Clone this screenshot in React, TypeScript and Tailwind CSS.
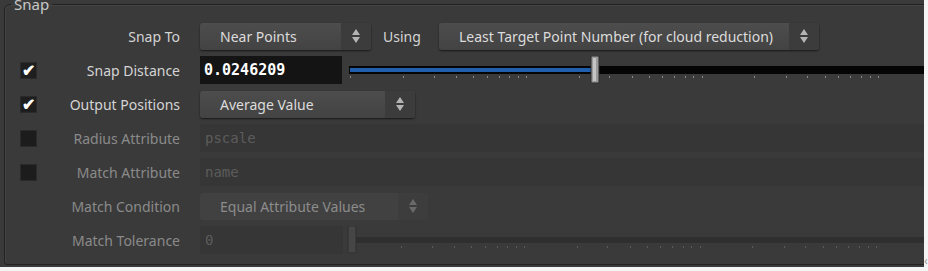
import React from "react";

const TICKS = [
  1, 54, 85, 107, 124, 138, 150, 160, 169, 177, 230, 260, 283, 300, 313, 325,
  336, 344, 353, 405, 437, 458, 476, 489, 501, 512, 521, 529,
];

function Checkbox({ checked, disabled }: { checked?: boolean; disabled?: boolean }) {
  return (
    <div
      className={`w-[17px] h-[17px] flex items-center justify-center border ${
        disabled ? "bg-[#1c1c1c] border-[#2a2a2a]" : "bg-[#1e1e1e] border-[#2a2a2a]"
      }`}
    >
      {checked && (
        <span className="text-white text-[16px] leading-none font-bold -mt-px">✔</span>
      )}
    </div>
  );
}

function Arrows({ dim }: { dim?: boolean }) {
  return (
    <svg width="10" height="16" viewBox="0 0 10 16">
      <path d="M5 1 L9 7 L1 7 Z" fill={dim ? "#6a6a6a" : "#b4b4b4"} />
      <path d="M1 9 L9 9 L5 15 Z" fill={dim ? "#6a6a6a" : "#b4b4b4"} />
    </svg>
  );
}

function Dropdown({
  text,
  width,
  disabled,
}: {
  text: string;
  width: number;
  disabled?: boolean;
}) {
  return (
    <div
      className={`flex h-[27px] rounded-[3px] overflow-hidden ${
        disabled
          ? "bg-[#414141] text-[#8c8c8c]"
          : "bg-gradient-to-b from-[#4d4d4d] to-[#434343] text-[#dcdcdc] shadow-[0_1px_2px_rgba(0,0,0,0.6)]"
      }`}
      style={{ width }}
    >
      <div className="flex-1 flex items-center pl-5 text-[14px] whitespace-nowrap">{text}</div>
      <div
        className={`w-[30px] flex items-center justify-center ${
          disabled ? "bg-[#3d3d3d]" : "bg-[#3c3c3c]"
        }`}
      >
        <Arrows dim={disabled} />
      </div>
    </div>
  );
}

function Slider({
  handle,
  disabled,
}: {
  handle: number;
  disabled?: boolean;
}) {
  return (
    <svg width="580" height="28" className="shrink-0">
      {disabled ? (
        <rect x={handle} y="11" width="580" height="6" fill="#2f2f2f" />
      ) : (
        <>
          <rect x="0" y="10" width="580" height="8" fill="#050505" />
          <rect x="1" y="12" width={handle} height="4" fill="#1f5fae" />
        </>
      )}
      {TICKS.map((t) => (
        <rect
          key={t}
          x={t}
          y="20"
          width="1"
          height="2"
          fill={disabled ? "#5a5a5a" : "#8a8a8a"}
        />
      ))}
      <rect
        x={handle - 1}
        y="0"
        width="8"
        height="27"
        rx="1"
        fill={disabled ? "#464646" : "#9a9a9a"}
        stroke={disabled ? "#2e2e2e" : "#2a2a2a"}
      />
      {!disabled && <rect x={handle + 1} y="2" width="3" height="23" fill="#c4c4c4" />}
    </svg>
  );
}

function Row({
  label,
  check,
  disabled,
  children,
}: {
  label: string;
  check?: "on" | "off";
  disabled?: boolean;
  children: React.ReactNode;
}) {
  return (
    <div className="flex items-center h-[28px]">
      <div className="w-[36px] flex items-center pl-[15px]">
        {check && <Checkbox checked={check === "on"} disabled={disabled} />}
      </div>
      <div
        className={`w-[139px] text-right text-[14px] whitespace-nowrap ${
          disabled ? "text-[#8a8a8a]" : "text-[#d4d4d4]"
        }`}
      >
        {label}
      </div>
      <div className="ml-[20px] flex items-center gap-[7px] flex-1 min-w-0">{children}</div>
    </div>
  );
}

export default function App() {
  return (
    <div
      className="flex w-[928px] h-[271px] bg-[#f4f4f4] overflow-hidden"
      style={{ fontFamily: '"Noto Sans", "Open Sans", sans-serif' }}
    >
      <div className="w-[924px] h-[267px] bg-[#3a3a3a] overflow-hidden shrink-0">
        <fieldset className="ml-[4px] mt-[-6px] w-[920px] h-[271px] border border-[#222] rounded-tl-[6px] rounded-bl-[3px] shadow-[inset_1px_1px_0_#444]">
          <legend className="ml-[6px] px-[3px] text-[15px] leading-[20px] text-[#c8c8c8]">
            Snap
          </legend>
          <div className="flex flex-col gap-[6px] pt-[8px]">
            <Row label="Snap To">
              <Dropdown text="Near Points" width={171} />
              <span className="ml-[5px] w-[49px] text-[14px] text-[#d4d4d4]">Using</span>
              <Dropdown text="Least Target Point Number (for cloud reduction)" width={380} />
            </Row>
            <Row label="Snap Distance" check="on">
              <div className="w-[142px] h-[28px] bg-[#141414] flex items-center pl-[4px] text-[15px] font-bold text-white font-['DejaVu_Sans_Mono',monospace]">
                0.0246209
              </div>
              <Slider handle={243} />
            </Row>
            <Row label="Output Positions" check="on">
              <Dropdown text="Average Value" width={215} />
            </Row>
            <Row label="Radius Attribute" check="off" disabled>
              <div className="flex-1 h-[28px] bg-[#363636] flex items-center pl-[5px] text-[14px] text-[#5c5c5c] font-['DejaVu_Sans_Mono',monospace]">
                pscale
              </div>
            </Row>
            <Row label="Match Attribute" check="off" disabled>
              <div className="flex-1 h-[28px] bg-[#363636] flex items-center pl-[5px] text-[14px] text-[#5c5c5c] font-['DejaVu_Sans_Mono',monospace]">
                name
              </div>
            </Row>
            <Row label="Match Condition" disabled>
              <Dropdown text="Equal Attribute Values" width={228} disabled />
            </Row>
            <Row label="Match Tolerance" disabled>
              <div className="w-[143px] h-[28px] bg-[#363636] flex items-center pl-[5px] text-[14px] text-[#5c5c5c] font-['DejaVu_Sans_Mono',monospace]">
                0
              </div>
              <div className="-ml-[3px]">
                <Slider handle={2} disabled />
              </div>
            </Row>
          </div>
        </fieldset>
      </div>
      <div className="flex-1 flex items-end pb-[4px]">
        <span className="text-[12px] leading-none text-[#999]">‹</span>
      </div>
    </div>
  );
}
